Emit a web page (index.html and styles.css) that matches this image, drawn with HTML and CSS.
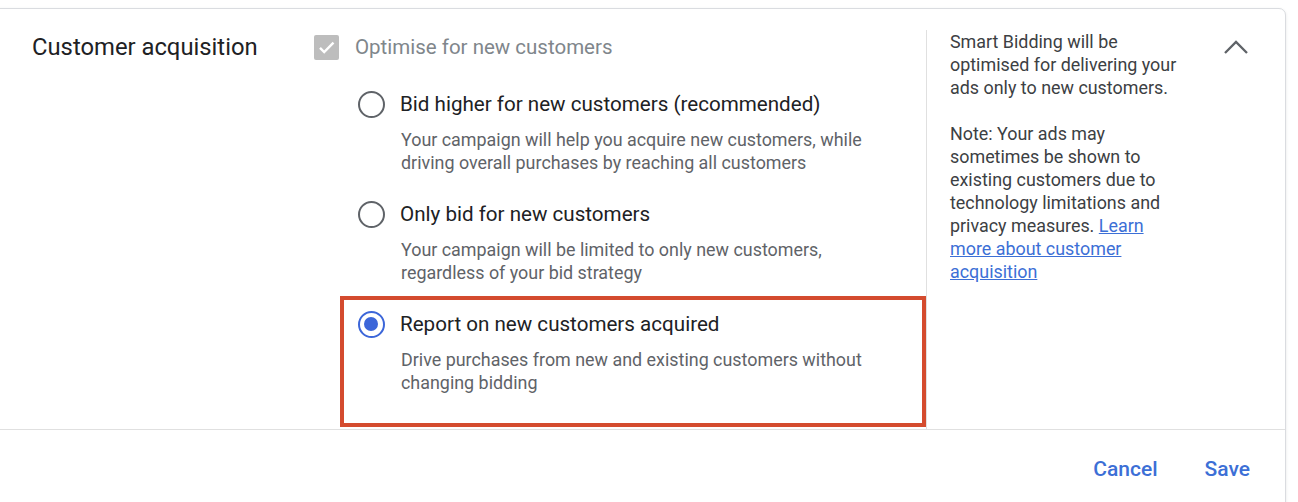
FILE: index.html
```html
<!DOCTYPE html>
<html>
<head>
<meta charset="utf-8">
<link rel="stylesheet" href="styles.css">
</head>
<body>
<div class="card">
  <div class="card-body">
    <div class="col-label">
      <div class="section-title">Customer acquisition</div>
    </div>
    <div class="col-options">
      <div class="check-row">
        <span class="checkbox">
          <svg width="25" height="25" viewBox="0 0 25 25"><path d="M6 12.8l4.2 4.2L19.5 7.7" fill="none" stroke="#fff" stroke-width="2.4"/></svg>
        </span>
        <span class="check-label">Optimise for new customers</span>
      </div>
      <div class="options">
        <div class="option">
          <div class="radio-row">
            <span class="radio"></span>
            <span class="radio-label">Bid higher for new customers (recommended)</span>
          </div>
          <div class="desc">Your campaign will help you acquire new customers, while driving overall purchases by reaching all customers</div>
        </div>
        <div class="option">
          <div class="radio-row">
            <span class="radio"></span>
            <span class="radio-label">Only bid for new customers</span>
          </div>
          <div class="desc">Your campaign will be limited to only new customers, regardless of your bid strategy</div>
        </div>
        <div class="option highlight">
          <div class="radio-row">
            <span class="radio checked"></span>
            <span class="radio-label">Report on new customers acquired</span>
          </div>
          <div class="desc">Drive purchases from new and existing customers without changing bidding</div>
        </div>
      </div>
    </div>
    <div class="col-help">
      <div class="help-text">
        <p>Smart Bidding will be optimised for delivering your ads only to new customers.</p>
        <p>Note: Your ads may sometimes be shown to existing customers due to technology limitations and privacy measures. <a href="#" class="link">Learn more about customer acquisition</a></p>
      </div>
      <div class="chevron">
        <svg width="26" height="16" viewBox="0 0 26 16"><polyline points="2,14 13,3 24,14" fill="none" stroke="#5f6368" stroke-width="2.3"/></svg>
      </div>
    </div>
  </div>
  <div class="card-footer">
    <button class="btn">Cancel</button>
    <button class="btn">Save</button>
  </div>
</div>
</body>
</html>
```
FILE: styles.css
```css
* { box-sizing: border-box; }
html, body { margin: 0; padding: 0; background: #fff; overflow: hidden; }
body { font-family: Roboto, "Liberation Sans", sans-serif; color: #202124; }

.card {
  margin: 8px 0 0 -1px;
  width: 1287px;
  border: 1px solid #dadce0;
  border-radius: 0 7px 0 0;
  box-shadow: 0 1px 3px rgba(60,64,67,0.12);
  background: #fff;
}

.card-body {
  display: flex;
  padding-top: 21px;
  border-bottom: 1px solid #e0e0e0;
  height: 421px;
}

.col-label {
  width: 314px;
  padding: 3px 0 0 32px;
  flex: none;
}
.section-title {
  font-size: 23.8px;
  line-height: 28px;
  color: #202124;
}

.col-options {
  width: 612px;
  flex: none;
  padding-top: 3px;
}
.check-row {
  display: flex;
  align-items: center;
  height: 28px;
}
.checkbox {
  width: 25px;
  height: 25px;
  border-radius: 2px;
  background: #bdbdbd;
  display: inline-flex;
  flex: none;
}
.check-label {
  margin-left: 16px;
  font-size: 20.5px;
  color: #80868b;
}

.options {
  margin-left: 26px;
  margin-top: 15px;
}
.option {
  border: 4px solid transparent;
  padding: 10px 14px 8px;
}
.option.highlight {
  border-color: #d44b2e;
  padding-bottom: 29px;
}
.radio-row {
  display: flex;
  align-items: center;
  height: 28px;
}
.radio {
  width: 27px;
  height: 27px;
  border-radius: 50%;
  border: 2.5px solid #5f6368;
  flex: none;
  position: relative;
}
.radio.checked { border-color: #3c66d9; }
.radio.checked::after {
  content: "";
  position: absolute;
  left: 4px; top: 4px;
  width: 14px; height: 14px;
  border-radius: 50%;
  background: #3c66d9;
}
.radio-label {
  margin-left: 15px;
  font-size: 20.6px;
  color: #202124;
}
.desc {
  margin: 10px 0 0 43px;
  font-size: 17.9px;
  line-height: 23px;
  color: #5f6368;
  max-width: 485px;
}

.col-help {
  flex: 1;
  border-left: 1px solid #e0e0e0;
  padding-left: 23px;
  display: flex;
}
.help-text {
  width: 234px;
  flex: none;
  font-size: 17.9px;
  line-height: 23px;
  color: #3c4043;
}
.help-text p { margin: 0 0 23px; }
.link { color: #3c6fd6; text-decoration: underline; }
.chevron {
  margin-left: 39px;
  padding-top: 9px;
}

.card-footer {
  display: flex;
  justify-content: flex-end;
  gap: 47px;
  padding: 25px 35px 0 0;
  height: 100px;
}
.btn {
  border: none;
  background: none;
  padding: 0;
  font-family: Roboto, "Liberation Sans", sans-serif;
  font-size: 21px;
  font-weight: 500;
  color: #3c6fd6;
  line-height: 28px;
  height: 28px;
}
```
